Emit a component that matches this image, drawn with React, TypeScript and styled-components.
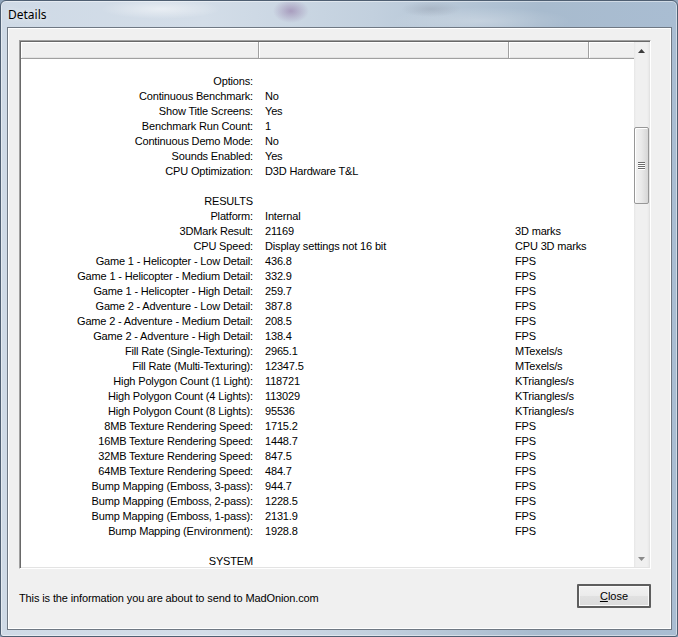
import React from "react";
import styled, { createGlobalStyle } from "styled-components";

type Row = { label?: string; value?: string; unit?: string };

const rows: Row[] = [
  {},
  { label: "Options:" },
  { label: "Continuous Benchmark:", value: "No" },
  { label: "Show Title Screens:", value: "Yes" },
  { label: "Benchmark Run Count:", value: "1" },
  { label: "Continuous Demo Mode:", value: "No" },
  { label: "Sounds Enabled:", value: "Yes" },
  { label: "CPU Optimization:", value: "D3D Hardware T&L" },
  {},
  { label: "RESULTS" },
  { label: "Platform:", value: "Internal" },
  { label: "3DMark Result:", value: "21169", unit: "3D marks" },
  { label: "CPU Speed:", value: "Display settings not 16 bit", unit: "CPU 3D marks" },
  { label: "Game 1 - Helicopter - Low Detail:", value: "436.8", unit: "FPS" },
  { label: "Game 1 - Helicopter - Medium Detail:", value: "332.9", unit: "FPS" },
  { label: "Game 1 - Helicopter - High Detail:", value: "259.7", unit: "FPS" },
  { label: "Game 2 - Adventure - Low Detail:", value: "387.8", unit: "FPS" },
  { label: "Game 2 - Adventure - Medium Detail:", value: "208.5", unit: "FPS" },
  { label: "Game 2 - Adventure - High Detail:", value: "138.4", unit: "FPS" },
  { label: "Fill Rate (Single-Texturing):", value: "2965.1", unit: "MTexels/s" },
  { label: "Fill Rate (Multi-Texturing):", value: "12347.5", unit: "MTexels/s" },
  { label: "High Polygon Count (1 Light):", value: "118721", unit: "KTriangles/s" },
  { label: "High Polygon Count (4 Lights):", value: "113029", unit: "KTriangles/s" },
  { label: "High Polygon Count (8 Lights):", value: "95536", unit: "KTriangles/s" },
  { label: "8MB Texture Rendering Speed:", value: "1715.2", unit: "FPS" },
  { label: "16MB Texture Rendering Speed:", value: "1448.7", unit: "FPS" },
  { label: "32MB Texture Rendering Speed:", value: "847.5", unit: "FPS" },
  { label: "64MB Texture Rendering Speed:", value: "484.7", unit: "FPS" },
  { label: "Bump Mapping (Emboss, 3-pass):", value: "944.7", unit: "FPS" },
  { label: "Bump Mapping (Emboss, 2-pass):", value: "1228.5", unit: "FPS" },
  { label: "Bump Mapping (Emboss, 1-pass):", value: "2131.9", unit: "FPS" },
  { label: "Bump Mapping (Environment):", value: "1928.8", unit: "FPS" },
  {},
  { label: "SYSTEM" },
];

const columns = [238, 250, 80, 45];
const gridColumns = columns.map((c) => `${c}px`).join(" ");

const App: React.FC = () => {
  return (
    <>
      <GlobalStyle />
      <Window>
        <TitleBar>Details</TitleBar>
        <Client>
          <ListBox>
            <ListArea>
              <Header>
                {columns.map((_, i) => (
                  <HeaderCell key={i} />
                ))}
              </Header>
              <Body>
                {rows.map((row, i) => (
                  <DataRow key={i}>
                    <LabelCell>{row.label}</LabelCell>
                    <ValueCell>{row.value}</ValueCell>
                    <ValueCell>{row.unit}</ValueCell>
                    <ValueCell />
                  </DataRow>
                ))}
              </Body>
            </ListArea>
            <ScrollBar>
              <ArrowButton>
                <svg width="7" height="4" viewBox="0 0 7 4">
                  <path d="M3.5 0 L7 4 L0 4 Z" fill="#3c3c3c" />
                </svg>
              </ArrowButton>
              <Thumb>
                <Grip>
                  <span />
                  <span />
                  <span />
                  <span />
                </Grip>
              </Thumb>
              <Track />
              <ArrowButton>
                <svg width="7" height="4" viewBox="0 0 7 4">
                  <path d="M0 0 L7 0 L3.5 4 Z" fill="#8a8a8a" />
                </svg>
              </ArrowButton>
            </ScrollBar>
          </ListBox>
          <Footer>
            <FooterText>This is the information you are about to send to MadOnion.com</FooterText>
            <CloseButton>
              <u>C</u>lose
            </CloseButton>
          </Footer>
        </Client>
      </Window>
    </>
  );
};

const GlobalStyle = createGlobalStyle`
  html, body {
    margin: 0;
    padding: 0;
    background: #8fa4ba;
    overflow: hidden;
  }
`;

const Window = styled.div`
  width: 678px;
  height: 637px;
  box-sizing: border-box;
  display: flex;
  flex-direction: column;
  border: 1px solid #4f5f72;
  border-radius: 6px 6px 3px 3px;
  box-shadow: inset 0 0 0 1px rgba(255, 255, 255, 0.45);
  background:
    radial-gradient(ellipse 18px 12px at 290px 10px, rgba(140, 110, 160, 0.55), transparent),
    radial-gradient(ellipse 60px 10px at 160px 8px, rgba(255, 255, 255, 0.5), transparent),
    radial-gradient(ellipse 30px 8px at 430px 8px, rgba(150, 160, 175, 0.45), transparent),
    radial-gradient(ellipse 90px 14px at 480px 20px, rgba(255, 255, 255, 0.25), transparent),
    linear-gradient(
      to right,
      #cfdae6 0%,
      #d3dde8 30%,
      #c2d0de 55%,
      #a8bbce 80%,
      #a9bdd2 100%
    );
`;

const TitleBar = styled.div`
  height: 26px;
  display: flex;
  align-items: center;
  padding-left: 7px;
  font-family: "Noto Sans", "Open Sans", sans-serif;
  font-size: 12px;
  color: #000;
  text-shadow: 0 0 6px rgba(255, 255, 255, 0.9);
`;

const Client = styled.div`
  flex: 1;
  margin: 0 5px 6px 6px;
  box-sizing: border-box;
  display: flex;
  flex-direction: column;
  padding: 12px 20px 0 11px;
  background: #f0f0f0;
  border: 1px solid #6f7883;
  box-shadow: inset 1px 1px 0 #ffffff, inset -1px -1px 0 #ffffff;
`;

const ListBox = styled.div`
  width: 632px;
  height: 529px;
  box-sizing: border-box;
  display: flex;
  border-style: solid;
  border-width: 1px;
  border-color: #a0a0a0 #ffffff #ffffff #a0a0a0;
  box-shadow: inset 1px 1px 0 #696969, inset -1px -1px 0 #e3e3e3;
  padding: 1px;
  background: #ffffff;
`;

const ListArea = styled.div`
  width: 613px;
  display: flex;
  flex-direction: column;
  overflow: hidden;
`;

const Header = styled.div`
  display: grid;
  grid-template-columns: ${gridColumns};
  height: 17px;
  flex-shrink: 0;
  box-sizing: border-box;
  border-bottom: 1px solid #a0a0a0;
  background: #f0f0f0;
`;

const HeaderCell = styled.div`
  box-sizing: border-box;
  border-right: 1px solid #a0a0a0;
  box-shadow: inset 1px 1px 0 #ffffff, inset 0 -1px 0 #e3e3e3;
  &:last-child {
    border-right: none;
  }
`;

const Body = styled.div`
  flex: 1;
  overflow: hidden;
  font-family: "Liberation Sans", Arial, sans-serif;
  font-size: 11px;
  letter-spacing: -0.16px;
  color: #000;
`;

const DataRow = styled.div`
  display: grid;
  grid-template-columns: ${gridColumns};
  height: 15px;
  line-height: 15px;
`;

const LabelCell = styled.div`
  text-align: right;
  padding-right: 6px;
  white-space: nowrap;
`;

const ValueCell = styled.div`
  padding-left: 6px;
  white-space: nowrap;
  overflow: hidden;
`;

const ScrollBar = styled.div`
  width: 15px;
  display: flex;
  flex-direction: column;
  background: linear-gradient(to right, #e6e6e6 0, #f0f0f0 2px, #f0f0f0 13px, #e8e8e8 15px);
`;

const ArrowButton = styled.div`
  height: 17px;
  flex-shrink: 0;
  display: flex;
  align-items: center;
  justify-content: center;
`;

const Thumb = styled.div`
  margin-top: 68px;
  height: 77px;
  flex-shrink: 0;
  box-sizing: border-box;
  border: 1px solid #979797;
  border-radius: 2px;
  box-shadow: inset 1px 1px 0 #ffffff;
  background: linear-gradient(to right, #f3f3f3 0%, #e9e9e9 50%, #d6d6d6 100%);
  display: flex;
  align-items: center;
  justify-content: center;
`;

const Grip = styled.div`
  display: flex;
  flex-direction: column;
  gap: 1px;
  span {
    display: block;
    width: 7px;
    height: 1px;
    background: #6c6c6c;
    box-shadow: 0 1px 0 #ffffff;
  }
`;

const Track = styled.div`
  flex: 1;
`;

const Footer = styled.div`
  display: flex;
  align-items: center;
  justify-content: space-between;
  margin-top: 15px;
  height: 24px;
`;

const FooterText = styled.span`
  font-family: "Liberation Sans", Arial, sans-serif;
  font-size: 11px;
  letter-spacing: -0.12px;
  color: #000;
  padding-top: 4px;
`;

const CloseButton = styled.button`
  width: 74px;
  height: 24px;
  box-sizing: border-box;
  padding: 0;
  border: 2px solid #5e5e5e;
  border-radius: 1px;
  background: linear-gradient(to bottom, #f2f2f2 0%, #ebebeb 50%, #e1e1e1 51%, #dcdcdc 100%);
  box-shadow: inset 0 0 0 1px #fafafa;
  font-family: "Liberation Sans", Arial, sans-serif;
  font-size: 11px;
  color: #000;
`;

export default App;
